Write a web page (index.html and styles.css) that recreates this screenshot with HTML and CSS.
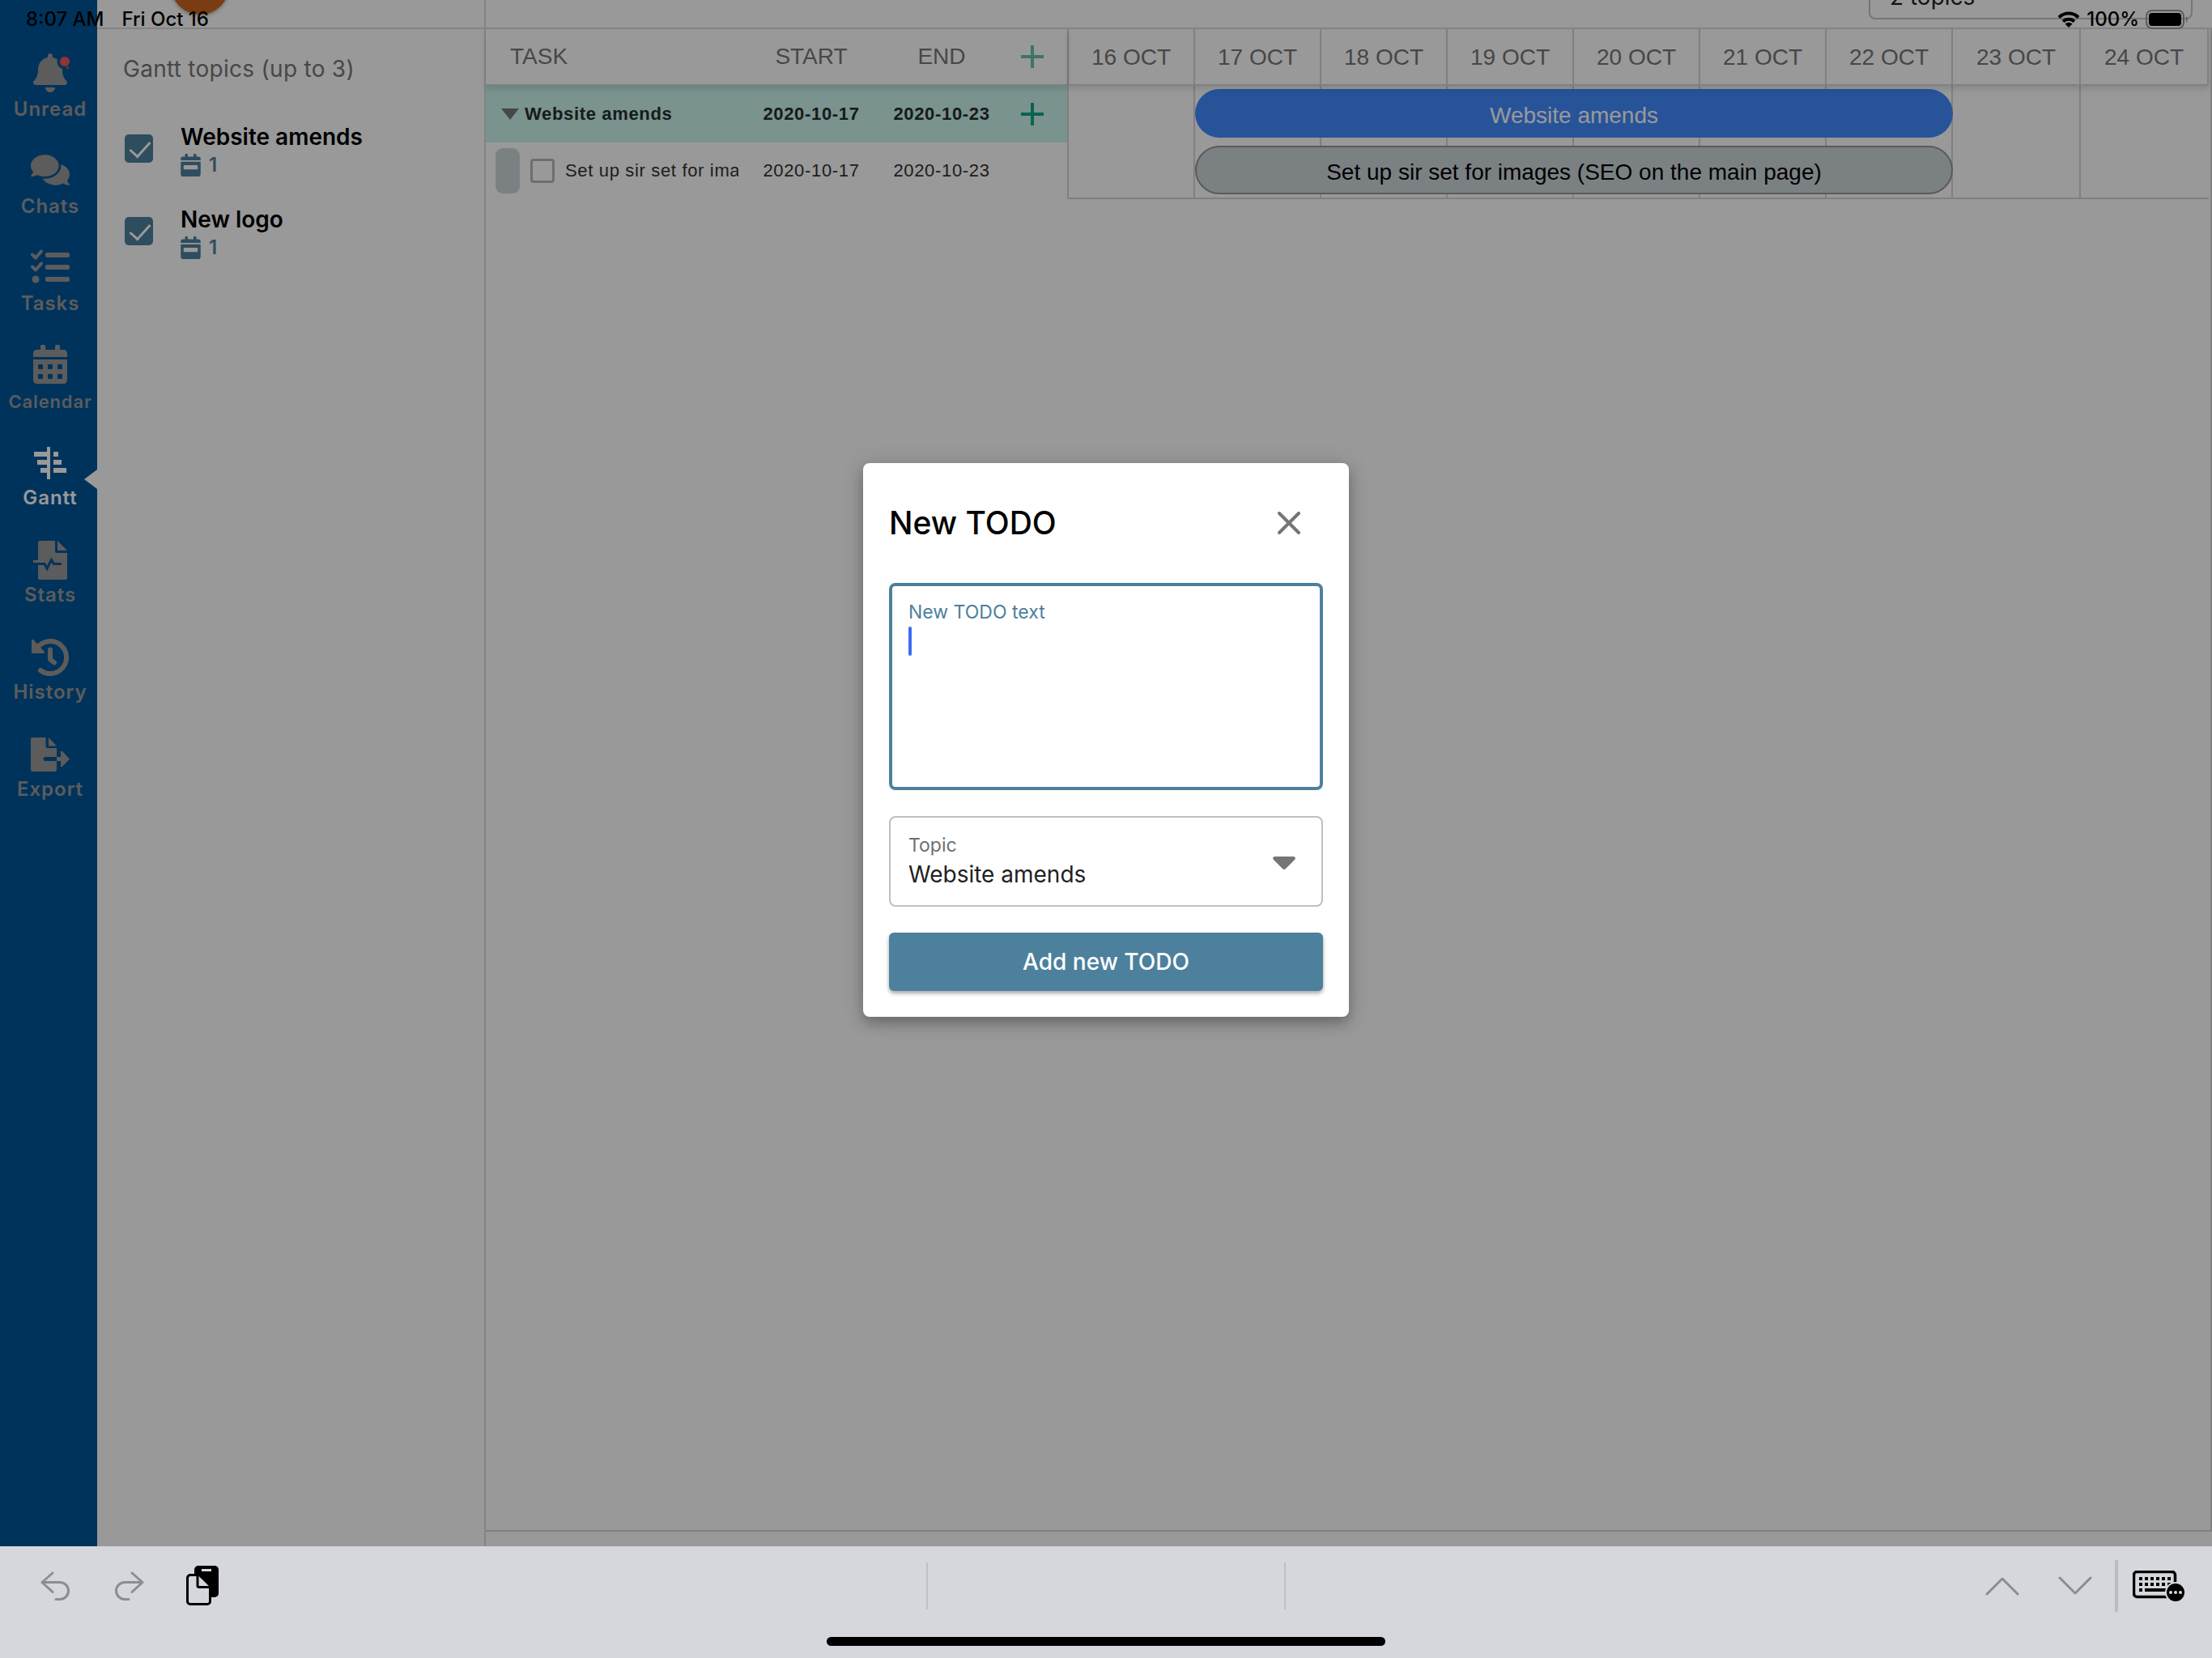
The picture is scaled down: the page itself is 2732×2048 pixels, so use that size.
FILE: index.html
```html
<!DOCTYPE html>
<html lang="en">
<head>
    <meta charset="UTF-8">
    <meta name="viewport" content="width=device-width, initial-scale=1.0">
    <title>Gantt</title>
    <link rel="stylesheet" href="styles.css">
</head>
<body>
    <div class="status-bar">
        <div class="status-left">
            <span>8:07 AM</span>
            <span>Fri Oct 16</span>
        </div>
        <div class="status-right">
            <svg class="wifi" viewBox="0 0 28 20" aria-hidden="true">
                <path d="M2 7.500a17 17 0 0 1 24 0M7 12.500a10 10 0 0 1 14 0" fill="none" stroke="#000" stroke-width="4"/>
                <path d="M14 20l-4.500-4.500a6.500 6.500 0 0 1 9 0z"/>
            </svg>
            <span>100%</span>
            <svg class="battery" viewBox="0 0 54 24" aria-hidden="true">
                <rect x="1" y="1" width="46" height="22" rx="7" fill="none" stroke="#5c5c5c" stroke-width="2"/>
                <rect x="4" y="4" width="40" height="16" rx="4"/>
                <path d="M50 8q3.500 4 0 8z" fill="#5c5c5c"/>
            </svg>
        </div>
    </div>

    <div class="app">
        <nav class="sidebar">
            <a href="#" class="nav-item">
                <svg viewBox="0 0 48 48" aria-hidden="true">
                    <path transform="translate(3 0) scale(.09375)" d="M224 512c35.320 0 63.970-28.650 63.970-64H160.030c0 35.350 28.650 64 63.970 64zm215.390-149.710c-19.320-20.760-55.470-51.990-55.470-154.290 0-77.700-54.480-139.900-127.940-155.160V32c0-17.670-14.320-32-31.980-32s-31.980 14.330-31.980 32v20.840C118.560 68.100 64.080 130.300 64.080 208c0 102.300-36.150 133.530-55.470 154.290-6 6.450-8.660 14.160-8.610 21.710.11 16.400 12.980 32 32.100 32h383.800c19.120 0 32-15.600 32.100-32 .05-7.550-2.610-15.270-8.610-21.710z"/>
                    <circle cx="42" cy="10" r="9.500" fill="#005598"/>
                    <circle cx="42" cy="10" r="6" fill="#f55656"/>
                    <circle cx="45.500" cy="17.500" r="1.500" fill="#f55656"/>
                </svg>
                <span>Unread</span>
            </a>
            <a href="#" class="nav-item">
                <svg viewBox="0 0 576 576" aria-hidden="true"><path transform="translate(0 32)" d="M416 192c0-88.400-93.100-160-208-160S0 103.600 0 192c0 34.300 14.100 65.900 38 92-13.400 30.200-35.500 54.200-35.800 54.500-2.200 2.300-2.800 5.700-1.500 8.700S4.800 352 8 352c36.600 0 66.900-12.300 88.700-25 32.200 15.700 70.300 25 111.300 25 114.900 0 208-71.600 208-160zm122 220c23.900-26 38-57.700 38-92 0-66.900-53.500-124.200-129.300-148.100.9 6.600 1.300 13.300 1.300 20.100 0 105.900-107.700 192-240 192-10.800 0-21.300-.8-31.700-1.900C207.800 439.600 281.800 480 368 480c41 0 79.100-9.200 111.300-25 21.800 12.700 52.100 25 88.700 25 3.200 0 6.100-1.900 7.300-4.800 1.300-2.900.7-6.300-1.500-8.700-.3-.2-22.400-24.200-35.800-54.500z"/></svg>
                <span>Chats</span>
            </a>
            <a href="#" class="nav-item">
                <svg viewBox="0 0 48 48" aria-hidden="true">
                    <path d="M2 8.500l4 4 7-8M2 23.500l4 4 7-8" fill="none" stroke="currentColor" stroke-width="4" stroke-linecap="round" stroke-linejoin="round"/>
                    <circle cx="6" cy="39" r="4.500"/>
                    <rect x="18" y="6" width="30" height="6" rx="2"/>
                    <rect x="18" y="21" width="30" height="6" rx="2"/>
                    <rect x="18" y="36" width="30" height="6" rx="2"/>
                </svg>
                <span>Tasks</span>
            </a>
            <a href="#" class="nav-item nav-item-long">
                <svg viewBox="0 0 48 48" aria-hidden="true"><path transform="translate(3 0) scale(.09375)" d="M0 464c0 26.500 21.500 48 48 48h352c26.500 0 48-21.500 48-48V192H0v272zm320-196c0-6.600 5.400-12 12-12h40c6.600 0 12 5.400 12 12v40c0 6.600-5.400 12-12 12h-40c-6.600 0-12-5.400-12-12v-40zm0 128c0-6.600 5.400-12 12-12h40c6.600 0 12 5.400 12 12v40c0 6.600-5.400 12-12 12h-40c-6.600 0-12-5.400-12-12v-40zM192 268c0-6.600 5.400-12 12-12h40c6.600 0 12 5.400 12 12v40c0 6.600-5.400 12-12 12h-40c-6.600 0-12-5.400-12-12v-40zm0 128c0-6.600 5.400-12 12-12h40c6.600 0 12 5.400 12 12v40c0 6.600-5.400 12-12 12h-40c-6.600 0-12-5.400-12-12v-40zM64 268c0-6.600 5.400-12 12-12h40c6.600 0 12 5.400 12 12v40c0 6.600-5.400 12-12 12H76c-6.600 0-12-5.400-12-12v-40zm0 128c0-6.600 5.400-12 12-12h40c6.600 0 12 5.400 12 12v40c0 6.600-5.400 12-12 12H76c-6.600 0-12-5.400-12-12v-40zM400 64h-48V16c0-8.800-7.200-16-16-16h-32c-8.800 0-16 7.200-16 16v48H160V16c0-8.800-7.200-16-16-16h-32c-8.800 0-16 7.200-16 16v48H48C21.500 64 0 85.500 0 112v48h448v-48c0-26.500-21.500-48-48-48z"/></svg>
                <span>Calendar</span>
            </a>
            <a href="#" class="nav-item active" aria-current="page">
                <svg viewBox="0 0 48 48" aria-hidden="true">
                    <path d="M20 6h4v40h-4zM4 12h17v6H4zM8 22h13v6H8zM12 32h9v6h-9zM28 12h6v6h-6zM28 22h10v6H28zM28 32h16v6H28z"/>
                </svg>
                <span>Gantt</span>
            </a>
            <a href="#" class="nav-item">
                <svg viewBox="0 0 48 48" aria-hidden="true">
                    <path d="M11 2h19v13a2 2 0 0 0 2 2h13v31a2 2 0 0 1-2 2H11a2 2 0 0 1-2-2V4a2 2 0 0 1 2-2zM33 2l12 12H33zM3 26h8v3H3z"/>
                    <path d="M8 30.500h9l3 6 5.500-11 3 5h8" fill="none" stroke="#005598" stroke-width="3" stroke-linecap="round"/>
                </svg>
                <span>Stats</span>
            </a>
            <a href="#" class="nav-item">
                <svg viewBox="0 0 48 48" aria-hidden="true">
                    <path d="M8.500 13.500a20 20 0 1 1 3.500 28.500" fill="none" stroke="currentColor" stroke-width="6" stroke-linecap="round"/>
                    <path d="M24 16.500v12l5 4" fill="none" stroke="currentColor" stroke-width="6" stroke-linecap="round" stroke-linejoin="round"/>
                    <path d="M1 5q0-2 2-1l14 15q0 2-1 2H2q-1 0-1-1z"/>
                </svg>
                <span>History</span>
            </a>
            <a href="#" class="nav-item">
                <svg viewBox="0 0 48 48" aria-hidden="true">
                    <path d="M2 5h16.500v11a2 2 0 0 0 2 2H32v27a2 2 0 0 1-2 2H2a2 2 0 0 1-2-2V7a2 2 0 0 1 2-2zM22 5l10 10.500H22z"/>
                    <path d="M18 31.500h14" stroke="#005598" stroke-width="5" stroke-linecap="round"/>
                    <path d="M32 29h5v-6q0-2 2-1l9 9.500-9 9.500q-2 1-2-1v-6h-5z"/>
                </svg>
                <span>Export</span>
            </a>
        </nav>

        <aside class="topics">
            <div class="top-strip">
                <div class="avatar"></div>
            </div>
            <div class="topics-body">
                <h2 class="topics-title">Gantt topics (up to 3)</h2>
                <div class="topic">
                    <input type="checkbox" id="topic-1" class="topic-check" checked>
                    <div>
                        <label for="topic-1" class="topic-name">Website amends</label>
                        <div class="topic-count">
                            <svg viewBox="0 0 448 512" aria-hidden="true"><path fill-rule="evenodd" d="M0 464c0 26.500 21.500 48 48 48h352c26.500 0 48-21.500 48-48V176H0zM64 272q0-16 16-16h288q16 0 16 16v64q0 16-16 16H80q-16 0-16-16zM400 64h-48V16q0-16-16-16h-32q-16 0-16 16v48H160V16q0-16-16-16h-32q-16 0-16 16v48H48Q0 64 0 112v32h448v-32q0-48-48-48z"/></svg>
                            <span>1</span>
                        </div>
                    </div>
                </div>
                <div class="topic">
                    <input type="checkbox" id="topic-2" class="topic-check" checked>
                    <div>
                        <label for="topic-2" class="topic-name">New logo</label>
                        <div class="topic-count">
                            <svg viewBox="0 0 448 512" aria-hidden="true"><path fill-rule="evenodd" d="M0 464c0 26.500 21.500 48 48 48h352c26.500 0 48-21.500 48-48V176H0zM64 272q0-16 16-16h288q16 0 16 16v64q0 16-16 16H80q-16 0-16-16zM400 64h-48V16q0-16-16-16h-32q-16 0-16 16v48H160V16q0-16-16-16h-32q-16 0-16 16v48H48Q0 64 0 112v32h448v-32q0-48-48-48z"/></svg>
                            <span>1</span>
                        </div>
                    </div>
                </div>
            </div>
        </aside>

        <main class="main">
            <div class="top-strip top-strip-end">
                <select class="topic-filter" aria-label="Topics">
                    <option>2 topics</option>
                </select>
            </div>
            <div class="gantt">
                <table class="task-table">
                    <colgroup>
                        <col>
                        <col class="col-start">
                        <col class="col-end">
                        <col class="col-add">
                    </colgroup>
                    <thead>
                        <tr>
                            <th class="task-head">TASK</th>
                            <th>START</th>
                            <th>END</th>
                            <th class="add-cell"><button class="add-btn light" aria-label="Add topic"><svg viewBox="0 0 28 28"><path d="M14 0v28M0 14h28"/></svg></button></th>
                        </tr>
                    </thead>
                    <tbody>
                        <tr class="group-row">
                            <td>
                                <div class="task-cell">
                                    <svg class="expand" viewBox="0 0 22 14" aria-hidden="true"><path d="M0 0h22L11 14z"/></svg>
                                    <span class="task-name">Website amends</span>
                                </div>
                            </td>
                            <td>2020-10-17</td>
                            <td>2020-10-23</td>
                            <td class="add-cell"><button class="add-btn" aria-label="Add task"><svg viewBox="0 0 28 28"><path d="M14 0v28M0 14h28"/></svg></button></td>
                        </tr>
                        <tr>
                            <td>
                                <div class="task-cell child">
                                    <span class="task-color"></span>
                                    <input type="checkbox" id="task-1" class="task-check">
                                    <label for="task-1" class="task-name">Set up sir set for images</label>
                                </div>
                            </td>
                            <td>2020-10-17</td>
                            <td>2020-10-23</td>
                            <td></td>
                        </tr>
                    </tbody>
                </table>

                <div class="timeline">
                    <div class="days">
                        <span>16 OCT</span>
                        <span>17 OCT</span>
                        <span>18 OCT</span>
                        <span>19 OCT</span>
                        <span>20 OCT</span>
                        <span>21 OCT</span>
                        <span>22 OCT</span>
                        <span>23 OCT</span>
                        <span>24 OCT</span>
                    </div>
                    <div class="chart">
                        <i class="line"></i><i class="line"></i><i class="line"></i>
                        <i class="line"></i><i class="line"></i><i class="line"></i>
                        <i class="line"></i><i class="line"></i><i class="line"></i>
                        <div class="bar bar-group">Website amends</div>
                        <div class="bar bar-task">Set up sir set for images (SEO on the main page)</div>
                    </div>
                </div>
            </div>
        </main>

        <div class="backdrop">
            <form class="modal" role="dialog" aria-labelledby="modal-title">
                <div class="modal-header">
                    <h1 id="modal-title">New TODO</h1>
                    <button type="button" class="close-btn" aria-label="Close">
                        <svg viewBox="0 0 28 28"><path d="M2 2l24 24M26 2L2 26"/></svg>
                    </button>
                </div>
                <div class="field focused">
                    <label for="todo-text">New TODO text</label>
                    <div class="todo-input">
                        <textarea id="todo-text"></textarea>
                        <span class="caret"></span>
                    </div>
                </div>
                <div class="field">
                    <label for="todo-topic">Topic</label>
                    <select id="todo-topic">
                        <option>Website amends</option>
                        <option>New logo</option>
                    </select>
                    <svg class="arrow" viewBox="0 0 28 16" aria-hidden="true"><path d="M2 0h24q3 1 1 4L16 15q-2 2-4 0L1 4q-2-3 1-4z"/></svg>
                </div>
                <button type="submit" class="submit-btn">Add new TODO</button>
            </form>
        </div>
    </div>

    <footer class="keyboard-bar">
        <div class="keyboard-row">
            <div class="tools">
                <button aria-label="Undo">
                    <svg width="38" height="36" viewBox="0 0 38 36"><path d="M15 2L2 13.500 15 25.500M2 13.500h22a10.500 10.500 0 0 1 0 21h-5" class="stroke"/></svg>
                </button>
                <button aria-label="Redo">
                    <svg width="38" height="36" viewBox="0 0 38 36"><path d="M23 2l13 11.500-13 12M36 13.500H14a10.500 10.500 0 0 0 0 21h5" class="stroke"/></svg>
                </button>
                <button aria-label="Paste">
                    <svg width="40" height="50" viewBox="0 0 40 50">
                        <rect x="10" y="0" width="30" height="39" rx="5"/>
                        <rect x="19" y="4" width="12" height="3" fill="#d6d7dc"/>
                        <path d="M5 11.500h9L29 26v17a4 4 0 0 1-4 4.500H5A3.500 3.500 0 0 1 1.500 44V15A3.500 3.500 0 0 1 5 11.500z" fill="#d6d7dc"/>
                        <path d="M14 11.500H5A3.500 3.500 0 0 0 1.500 15v29A3.500 3.500 0 0 0 5 47.500h21a3.500 3.500 0 0 0 3.500-3.500V26.500H16q-2 0-2-2z" fill="none" stroke="#000" stroke-width="3"/>
                    </svg>
                </button>
            </div>
            <div class="suggestion"></div>
            <div class="tools tools-right">
                <button aria-label="Previous field">
                    <svg width="42" height="24" viewBox="0 0 42 24"><path d="M2 22L21 3l19 19" class="stroke"/></svg>
                </button>
                <button aria-label="Next field">
                    <svg width="42" height="24" viewBox="0 0 42 24"><path d="M2 2l19 19L40 2" class="stroke"/></svg>
                </button>
                <span class="divider"></span>
                <button aria-label="Keyboard">
                    <svg width="64" height="38" viewBox="0 0 64 38">
                        <rect x="1.500" y="1.500" width="51" height="31" rx="4" fill="none" stroke="#000" stroke-width="3.500"/>
                        <path d="M8 10h40M8 17h40" fill="none" stroke="#000" stroke-width="4" stroke-dasharray="4 3"/>
                        <path d="M8 24h4M15 24h26" fill="none" stroke="#000" stroke-width="4"/>
                        <circle cx="53" cy="27" r="13" fill="#d6d7dc"/>
                        <circle cx="53" cy="27" r="11"/>
                        <g fill="#d6d7dc"><circle cx="47" cy="27" r="2"/><circle cx="53" cy="27" r="2"/><circle cx="59" cy="27" r="2"/></g>
                    </svg>
                </button>
            </div>
        </div>
        <div class="home-indicator"></div>
    </footer>
</body>
</html>
```
FILE: styles.css
```css
* {
    box-sizing: border-box;
}

body {
    margin: 0;
    height: 100vh;
    display: flex;
    flex-direction: column;
    overflow: hidden;
    background: #fff;
    color: #000;
    font-family: Inter, "Noto Sans", sans-serif;
    font-size: 28px;
}

button {
    font-family: inherit;
    padding: 0;
    border: none;
    background: none;
    cursor: pointer;
}

svg {
    display: block;
    fill: currentColor;
}

/* device status bar, floats over everything */
.status-bar {
    position: absolute;
    z-index: 20;
    top: 8px;
    left: 0;
    right: 0;
    padding: 0 28px 0 32px;
    display: flex;
    justify-content: space-between;
    font-size: 24px;
    font-weight: 500;
    line-height: 32px;
}

.status-left {
    display: flex;
    gap: 22px;
}

.status-right {
    display: flex;
    align-items: center;
    gap: 8px;
}

.wifi {
    width: 28px;
    height: 20px;
}

.battery {
    width: 54px;
    height: 24px;
}

.app {
    position: relative;
    flex: 1;
    min-height: 0;
    display: flex;
}

/* left navigation */
.sidebar {
    width: 120px;
    flex: none;
    padding: 52px 0 0 4px;
    background: #005598;
}

.nav-item {
    position: relative;
    height: 120px;
    padding-top: 14px;
    display: flex;
    flex-direction: column;
    align-items: center;
    gap: 3px;
    color: #999;
    font-size: 24px;
    font-weight: 600;
    letter-spacing: 0.04em;
    line-height: 36px;
    text-decoration: none;
}

.nav-item svg {
    width: 48px;
    height: 48px;
    overflow: visible;
}

.nav-item-long {
    font-size: 22px;
    line-height: 38px;
}

.nav-item.active {
    color: #fff;
}

.nav-item.active::after {
    content: "";
    position: absolute;
    right: 0;
    top: 48px;
    border: 12px solid transparent;
    border-right: 16px solid #fff;
    border-left: none;
}

/* topics */
.topics {
    width: 480px;
    flex: none;
    border-right: 2px solid #ddd;
}

.top-strip {
    height: 36px;
    border-bottom: 2px solid #ddd;
    display: flex;
    align-items: flex-end;
    overflow: hidden;
}

.top-strip-end {
    justify-content: flex-end;
    padding-right: 24px;
}

.avatar {
    width: 72px;
    height: 72px;
    margin: 0 0 16px 91px;
    border-radius: 50%;
    background: #cb641e;
    box-shadow: 0 2px 4px rgba(0, 0, 0, 0.3);
}

.topic-filter {
    appearance: none;
    width: 400px;
    height: 56px;
    flex: none;
    margin-bottom: 10px;
    padding: 0 24px;
    border: 2px solid #c4c4c4;
    border-radius: 8px;
    background: none;
    color: #222;
    font: inherit;
}

.topics-body {
    padding: 28px 32px;
}

.topics-title {
    margin: 0 0 46px;
    color: #777;
    font-size: 28px;
    font-weight: 400;
    line-height: 42px;
    letter-spacing: 0.01em;
}

.topic {
    height: 102px;
    padding-left: 2px;
    display: flex;
    gap: 34px;
}

.topic-check {
    appearance: none;
    width: 35px;
    height: 35px;
    flex: none;
    margin: 14px 0 0;
    border-radius: 5px;
    background: #4d809d;
}

.topic-check:checked::before {
    content: "";
    display: block;
    width: 11px;
    height: 22px;
    margin: 3px 0 0 12px;
    border: solid #fff;
    border-width: 0 3px 3px 0;
    transform: rotate(42deg);
}

.topic-name {
    display: block;
    margin-bottom: 4px;
    font-weight: 600;
    line-height: 34px;
}

.topic-count {
    display: flex;
    align-items: center;
    gap: 10px;
    color: #4d809d;
    font-size: 24px;
    font-weight: 600;
    line-height: 28px;
}

.topic-count svg {
    width: 25px;
    height: 28px;
}

/* gantt */
.main {
    flex: 1;
    min-width: 0;
    display: flex;
    flex-direction: column;
    padding-bottom: 18px;
}

.gantt {
    flex: 1;
    display: flex;
    align-items: flex-start;
    padding-right: 2px;
    border-right: 2px solid #d6d6d6;
    border-bottom: 2px solid #d6d6d6;
    font-family: "Liberation Sans", Arial, sans-serif;
}

.task-table {
    width: 718px;
    flex: none;
    table-layout: fixed;
    border-collapse: separate;
    border-spacing: 0;
    color: #333;
    font-size: 22px;
    letter-spacing: 0.03em;
}

.col-start {
    width: 162px;
}

.col-end {
    width: 160px;
}

.col-add {
    width: 75px;
}

.task-table thead,
.days {
    position: relative;
    z-index: 1;
    box-shadow: 0 4px 8px rgba(0, 0, 0, 0.12);
}

.task-table th {
    height: 70px;
    padding: 0;
    border-bottom: 2px solid #d6d6d6;
    color: #777;
    font-size: 28px;
    font-weight: 400;
    letter-spacing: 0;
}

.task-table .task-head {
    padding-left: 30px;
    text-align: left;
}

.task-table td {
    height: 70px;
    padding: 0;
    text-align: center;
}

.group-row {
    background: #cbf5ee;
    color: #262e2d;
    font-weight: 700;
}

.task-cell {
    display: flex;
    align-items: center;
    gap: 7px;
    padding: 0 9px 0 19px;
}

.task-cell.child {
    gap: 13px;
    padding-left: 12px;
}

.expand {
    width: 22px;
    height: 14px;
    flex: none;
    color: #777;
}

.task-name {
    overflow: hidden;
    white-space: nowrap;
}

.task-color {
    width: 30px;
    height: 56px;
    flex: none;
    border-radius: 9px;
    background: #cdd7da;
}

.task-check {
    appearance: none;
    width: 30px;
    height: 30px;
    flex: none;
    margin: 0;
    border: 3px solid #b8b8b8;
    border-radius: 4px;
}

.task-table .add-cell {
    padding-right: 11px;
}

.add-btn {
    display: block;
    margin: 0 auto;
    color: #0fa588;
}

.add-btn.light {
    color: #6cc0b0;
}

.add-btn svg {
    width: 28px;
    height: 28px;
    stroke: currentColor;
    stroke-width: 4;
}

.timeline {
    flex: 1;
    min-width: 0;
    border-left: 2px solid #d6d6d6;
    border-bottom: 2px solid #d6d6d6;
}

.days,
.chart {
    display: grid;
    grid-template-columns: repeat(7, 156px) 1fr 1fr;
}

.days {
    height: 70px;
    border-bottom: 2px solid #d6d6d6;
    color: #777;
    line-height: 70px;
    text-align: center;
}

.days span,
.line {
    border-right: 2px solid #d6d6d6;
}

.days span {
    height: 68px;
}

.chart {
    grid-template-rows: 70px 68px;
}

.line {
    grid-row: 1 / 3;
}

.line:nth-child(1) { grid-column: 1; }
.line:nth-child(2) { grid-column: 2; }
.line:nth-child(3) { grid-column: 3; }
.line:nth-child(4) { grid-column: 4; }
.line:nth-child(5) { grid-column: 5; }
.line:nth-child(6) { grid-column: 6; }
.line:nth-child(7) { grid-column: 7; }
.line:nth-child(8) { grid-column: 8; }
.line:nth-child(9) { grid-column: 9; border-right: none; }

.bar {
    grid-column: 2 / 8;
    height: 60px;
    margin-top: 4px;
    border-radius: 30px;
    line-height: 66px;
    text-align: center;
    white-space: nowrap;
}

.bar-group {
    grid-row: 1;
    background: #418cff;
    color: #fff;
}

.bar-task {
    grid-row: 2;
    border: 2px solid #969696;
    background: #cdd7da;
    line-height: 62px;
}

/* modal */
.backdrop {
    position: absolute;
    z-index: 10;
    inset: 0;
    padding-bottom: 82px;
    display: flex;
    align-items: center;
    justify-content: center;
    background: rgba(0, 0, 0, 0.4);
}

.modal {
    width: 600px;
    padding: 32px;
    display: flex;
    flex-direction: column;
    gap: 32px;
    border-radius: 8px;
    background: #fff;
    box-shadow: 0 8px 16px rgba(0, 0, 0, 0.25), 0 2px 30px rgba(0, 0, 0, 0.12);
}

.modal-header {
    height: 84px;
    display: flex;
    align-items: center;
    justify-content: space-between;
    padding-right: 28px;
}

.modal-header h1 {
    margin: 0;
    font-size: 39px;
    font-weight: 500;
    line-height: 48px;
}

.close-btn {
    color: #757575;
}

.close-btn svg {
    width: 28px;
    height: 28px;
    stroke: currentColor;
    stroke-width: 4;
    stroke-linecap: round;
}

.field {
    position: relative;
    padding: 18px 22px;
    border: 2px solid #c0c0c0;
    border-radius: 8px;
}

.field label {
    display: block;
    color: #6f6f6f;
    font-size: 23px;
    line-height: 32px;
}

.field.focused {
    padding: 16px 20px;
    border: 4px solid #4d809d;
}

.field.focused label {
    color: #4d809d;
}

.field select,
.field textarea {
    appearance: none;
    display: block;
    width: 100%;
    padding: 0;
    border: none;
    outline: none;
    background: none;
    color: #212121;
    font: inherit;
    line-height: 40px;
}

.field select {
    height: 40px;
}

.field textarea {
    height: 184px;
    resize: none;
}

.todo-input {
    position: relative;
}

.caret {
    position: absolute;
    left: 0;
    top: 2px;
    width: 4px;
    height: 36px;
    border-radius: 2px;
    background: #3f6bf0;
}

.arrow {
    position: absolute;
    right: 32px;
    top: 48px;
    width: 28px;
    height: 16px;
    color: #757575;
}

.submit-btn {
    height: 72px;
    border-radius: 6px;
    background: #4d809d;
    box-shadow: 0 3px 5px rgba(0, 0, 0, 0.35);
    color: #fff;
    font-size: 28px;
    font-weight: 500;
}

/* shortcut bar of the on-screen keyboard */
.keyboard-bar {
    height: 138px;
    flex: none;
    background: #d6d7dc;
}

.keyboard-row {
    height: 98px;
    display: grid;
    grid-template-columns: 1fr 444px 1fr;
    align-items: center;
}

.tools {
    display: flex;
    align-items: center;
    gap: 52px;
    padding: 0 50px;
}

.tools-right {
    justify-content: flex-end;
    gap: 48px;
    padding: 0 34px;
}

.tools .stroke {
    fill: none;
    stroke: #8c8c91;
    stroke-width: 3;
    stroke-linecap: round;
    stroke-linejoin: round;
}

.suggestion {
    height: 58px;
    border: solid #bfbfc4;
    border-width: 0 2px;
}

.divider {
    width: 4px;
    height: 64px;
    margin: 0 -30px 0 -20px;
    background: #bcbcc0;
}

.home-indicator {
    width: 690px;
    height: 11px;
    margin: 14px auto 0;
    border-radius: 6px;
    background: #000;
}
```
